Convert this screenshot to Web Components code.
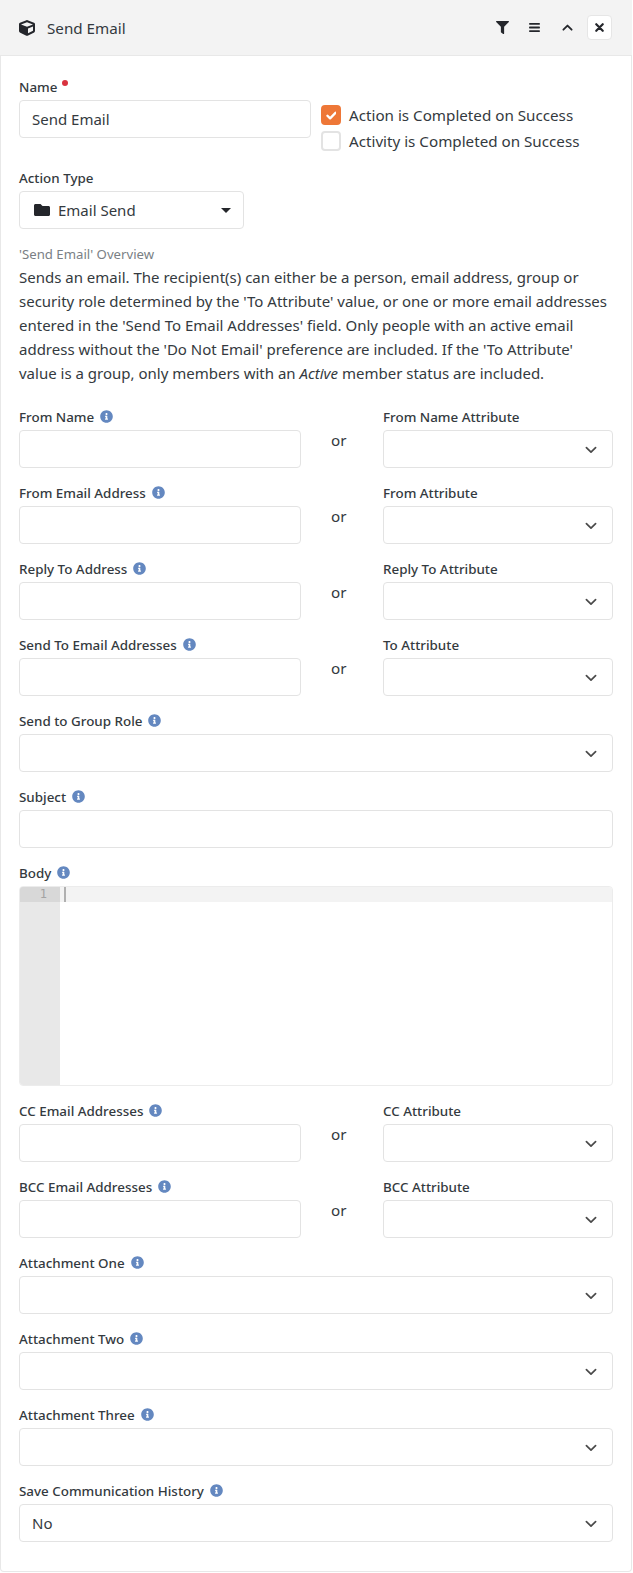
<!DOCTYPE html>
<html>
<head>
<meta charset="utf-8">
<title>Send Email</title>
<style>
  html, body { margin: 0; background: #fff; }
  body { font-family: "Noto Sans", sans-serif; color: #343a40; font-size: 15.2px; }
</style>
</head>
<body>
<action-panel heading="Send Email"></action-panel>

<script>
const ICONS = {
  cube: `<svg viewBox="0 0 512 512"><path fill="currentColor" d="M239.1 6.3l-208 78c-18.7 7-31.1 25-31.1 45v225.1c0 18.2 10.3 34.8 26.5 42.9l208 104c13.5 6.8 29.4 6.8 42.9 0l208-104c16.3-8.1 26.5-24.8 26.5-42.9V129.3c0-20-12.4-37.9-31.1-44.9l-208-78C262 2.2 250 2.2 239.1 6.3zM256 68.4l192 72v1.1l-192 78-192-78v-1.1l192-72zm32 356V275.5l160-65v133.9l-160 80z"/></svg>`,
  filter: `<svg viewBox="0 0 512 512"><path fill="currentColor" d="M487.976 0H24.028C2.71 0-8.047 25.866 7.058 40.971L192 225.941V432c0 7.831 3.821 15.17 10.237 19.662l80 55.98C298.02 518.69 320 507.493 320 487.98V225.941l184.947-184.97C520.021 25.896 509.338 0 487.976 0z"/></svg>`,
  bars: `<svg viewBox="0 0 12 10"><path fill="currentColor" d="M.5 0h11a.5.5 0 0 1 .5.5v1a.5.5 0 0 1-.5.5H.5a.5.5 0 0 1-.5-.5v-1A.5.5 0 0 1 .5 0zm0 4h11a.5.5 0 0 1 .5.5v1a.5.5 0 0 1-.5.5H.5a.5.5 0 0 1-.5-.5v-1A.5.5 0 0 1 .5 4zm0 4h11a.5.5 0 0 1 .5.5v1a.5.5 0 0 1-.5.5H.5a.5.5 0 0 1-.5-.5v-1A.5.5 0 0 1 .5 8z"/></svg>`,
  up: `<svg viewBox="0 0 12 8"><path fill="none" stroke="currentColor" stroke-width="2.1" stroke-linecap="round" stroke-linejoin="round" d="M1.3 6.5 6 1.8l4.7 4.7"/></svg>`,
  times: `<svg viewBox="0 0 10 10"><path fill="none" stroke="currentColor" stroke-width="2.4" stroke-linecap="round" d="M1.4 1.4l7.2 7.2M8.6 1.4 1.4 8.6"/></svg>`,
  folder: `<svg viewBox="0 0 512 512"><path fill="currentColor" d="M464 128H272l-64-64H48C21.49 64 0 85.49 0 112v288c0 26.51 21.49 48 48 48h416c26.51 0 48-21.49 48-48V176c0-26.51-21.49-48-48-48z"/></svg>`,
  info: `<svg viewBox="0 0 512 512"><path fill="currentColor" d="M256 8C119.043 8 8 119.083 8 256c0 136.997 111.043 248 248 248s248-111.003 248-248C504 119.083 392.957 8 256 8zm0 110c23.196 0 42 18.804 42 42s-18.804 42-42 42-42-18.804-42-42 18.804-42 42-42zm56 254c0 6.627-5.373 12-12 12h-88c-6.627 0-12-5.373-12-12v-24c0-6.627 5.373-12 12-12h12v-64h-12c-6.627 0-12-5.373-12-12v-24c0-6.627 5.373-12 12-12h64c6.627 0 12 5.373 12 12v100h12c6.627 0 12 5.373 12 12v24z"/></svg>`,
  chevron: `<svg viewBox="0 0 12 8"><path fill="none" stroke="currentColor" stroke-width="1.7" stroke-linecap="round" stroke-linejoin="round" d="M1.4 1.6 6 6.1l4.6-4.5"/></svg>`,
  check: `<svg viewBox="0 0 12 10"><path fill="none" stroke="currentColor" stroke-width="2.6" stroke-linecap="round" stroke-linejoin="round" d="M1.6 5.2 4.5 8l5.9-6"/></svg>`
};

class TextBox extends HTMLElement {
  constructor() {
    super();
    this.attachShadow({ mode: "open" });
  }
  connectedCallback() {
    this.shadowRoot.innerHTML = `
    <style>
      :host { display: block; box-sizing: border-box; height: 38px; padding: 0 12px; border: 1px solid #e3e3e3; border-radius: 4px; background: #fff; font-size: 15px; line-height: 36px; color: #343a40; }
    </style>
    <slot></slot>`;
  }
}
customElements.define("text-box", TextBox);

class SelectBox extends HTMLElement {
  constructor() {
    super();
    this.attachShadow({ mode: "open" });
  }
  connectedCallback() {
    this.shadowRoot.innerHTML = `
    <style>
      :host { display: flex; align-items: center; justify-content: space-between; box-sizing: border-box; height: 38px; padding: 0 15px 0 12px; border: 1px solid #e3e3e3; border-radius: 4px; background: #fff; font-size: 15px; color: #343a40; }
      .arrow { display: block; width: 12px; height: 8px; color: #4a4a4a; margin-top: 1px; }
      svg { display: block; }
    </style>
    <span><slot></slot></span>
    <span class="arrow">${ICONS.chevron}</span>`;
  }
}
customElements.define("select-box", SelectBox);

class PickerBox extends HTMLElement {
  constructor() {
    super();
    this.attachShadow({ mode: "open" });
  }
  connectedCallback() {
    this.shadowRoot.innerHTML = `
    <style>
      :host { display: flex; align-items: center; box-sizing: border-box; width: 225px; height: 38px; padding: 0 12px 0 14px; border: 1px solid #e3e3e3; border-radius: 4px; background: #fff; font-size: 15px; color: #343a40; }
      .folder { width: 16px; height: 16px; margin-right: 8px; color: #24262b; }
      .text { flex: 1; }
      .caret { width: 0; height: 0; border: 5px solid transparent; border-top: 5px solid #24262b; border-bottom: 0; }
      svg { display: block; }
    </style>
    <span class="folder">${ICONS.folder}</span>
    <span class="text"><slot></slot></span>
    <span class="caret"></span>`;
  }
}
customElements.define("picker-box", PickerBox);

class FormField extends HTMLElement {
  constructor() {
    super();
    this.attachShadow({ mode: "open" });
  }
  connectedCallback() {
    let label = this.getAttribute("label") ?? "";
    let mark = "";
    if (this.hasAttribute("required")) mark = `<span class="req"></span>`;
    if (this.hasAttribute("info")) mark = `<span class="info">${ICONS.info}</span>`;
    this.shadowRoot.innerHTML = `
    <style>
      :host { display: block; margin-bottom: var(--gap, 14px); }
      .label { display: flex; align-items: center; box-sizing: border-box; height: 24px; padding-bottom: 3px; font-size: 13.4px; font-weight: 500; color: #343a40; white-space: nowrap; }
      .req { width: 6px; height: 6px; border-radius: 50%; background: #d9333f; margin: -8px 0 0 5px; }
      .info { width: 13px; height: 13px; margin: -1px 0 0 6px; color: #6488c0; }
      svg { display: block; }
    </style>
    <div class="label">${label}${mark}</div>
    <slot></slot>`;
  }
}
customElements.define("form-field", FormField);

class OrRow extends HTMLElement {
  constructor() {
    super();
    this.attachShadow({ mode: "open" });
  }
  connectedCallback() {
    this.shadowRoot.innerHTML = `
    <style>
      :host { display: grid; grid-template-columns: 282px 82px 1fr; }
      .or { padding: 22px 0 0 30px; font-size: 15.2px; line-height: 24px; color: #343a40; }
    </style>
    <slot name="left"></slot>
    <div class="or">or</div>
    <slot name="right"></slot>`;
  }
}
customElements.define("or-row", OrRow);

class CheckItem extends HTMLElement {
  constructor() {
    super();
    this.attachShadow({ mode: "open" });
  }
  connectedCallback() {
    let on = this.hasAttribute("checked");
    this.shadowRoot.innerHTML = `
    <style>
      :host { display: flex; align-items: center; height: 26px; font-size: 15.2px; color: #343a40; white-space: nowrap; }
      .box { box-sizing: border-box; display: flex; align-items: center; justify-content: center; width: 20px; height: 20px; margin-right: 8px; border-radius: 4px; border: 2px solid #e3e3e3; background: #fff; color: #fff; }
      .box.on { background: #ee7737; border-color: #ee7737; }
      .box span { display: block; width: 11px; height: 9px; }
      svg { display: block; }
    </style>
    <div class="box ${on ? "on" : ""}">${on ? `<span>${ICONS.check}</span>` : ""}</div>
    <slot></slot>`;
  }
}
customElements.define("check-item", CheckItem);

class CodeEditor extends HTMLElement {
  constructor() {
    super();
    this.attachShadow({ mode: "open" });
  }
  connectedCallback() {
    this.shadowRoot.innerHTML = `
    <style>
      :host { display: flex; box-sizing: border-box; height: 200px; border: 1px solid #ececec; border-radius: 4px; overflow: hidden; background: #fff; }
      .gutter { width: 40px; background: #e8e8e8; }
      .num { height: 15px; padding-right: 13px; background: #d8d8d8; text-align: right; font-size: 12px; line-height: 15px; color: #a3a3a3; font-family: "DejaVu Sans Mono", monospace; }
      .lines { flex: 1; }
      .active { height: 15px; padding-left: 4px; background: #f3f3f3; }
      .cursor { width: 2px; height: 15px; background: #b0b0b0; }
    </style>
    <div class="gutter"><div class="num">1</div></div>
    <div class="lines"><div class="active"><div class="cursor"></div></div></div>`;
  }
}
customElements.define("code-editor", CodeEditor);

class ActionPanel extends HTMLElement {
  constructor() {
    super();
    this.attachShadow({ mode: "open" });
  }
  connectedCallback() {
    let heading = this.getAttribute("heading") ?? "";
    this.shadowRoot.innerHTML = `
    <style>
      :host { display: block; box-sizing: border-box; width: 632px; height: 1572px; border: 1px solid #e8e8e8; border-top: 0; border-radius: 0 0 4px 4px; background: #fff; }
      .head { display: flex; align-items: center; box-sizing: border-box; height: 56px; margin: 0 -1px; padding: 0 20px 0 19px; background: #f3f3f3; border-bottom: 1px solid #e8e8e8; }
      .cube { width: 16px; height: 16px; margin-right: 12px; color: #24262b; }
      .title { flex: 1; font-size: 15.2px; color: #343a40; }
      .actions { display: flex; align-items: center; gap: 7.5px; }
      .act { display: flex; align-items: center; justify-content: center; box-sizing: border-box; width: 25px; height: 25px; color: #24262b; }
      .act.filter svg { width: 13px; height: 13px; }
      .act.bars svg { width: 11px; height: 9px; }
      .act.up svg { width: 11px; height: 7px; }
      .act.close { background: #fff; border: 1px solid #e6e6e6; border-radius: 4px; }
      .act.close svg { width: 9px; height: 9px; }
      svg { display: block; }
      .body { padding: 20px 18px 0 18px; }
    </style>
    <div class="head">
      <span class="cube">${ICONS.cube}</span>
      <span class="title">${heading}</span>
      <div class="actions">
        <span class="act filter">${ICONS.filter}</span>
        <span class="act bars">${ICONS.bars}</span>
        <span class="act up">${ICONS.up}</span>
        <span class="act close">${ICONS.times}</span>
      </div>
    </div>
    <div class="body"><slot></slot></div>`;
  }
}
customElements.define("action-panel", ActionPanel);

class TopRow extends HTMLElement {
  constructor() {
    super();
    this.attachShadow({ mode: "open" });
  }
  connectedCallback() {
    this.shadowRoot.innerHTML = `
    <style>
      :host { display: grid; grid-template-columns: 292px 1fr; }
      .checks { padding: 26px 0 0 10px; }
    </style>
    <slot name="left"></slot>
    <div class="checks"><slot name="right"></slot></div>`;
  }
}
customElements.define("top-row", TopRow);

class OverviewNote extends HTMLElement {
  constructor() {
    super();
    this.attachShadow({ mode: "open" });
  }
  connectedCallback() {
    let heading = this.getAttribute("heading") ?? "";
    this.shadowRoot.innerHTML = `
    <style>
      :host { display: block; margin: 0 0 21px; padding-top: 14px; }
      .small { height: 22px; font-size: 13.2px; line-height: 22px; color: #7a7f85; }
      .text { font-size: 15px; line-height: 24px; color: #343a40; }
    </style>
    <div class="small">${heading}</div>
    <div class="text"><slot></slot></div>`;
  }
}
customElements.define("overview-note", OverviewNote);

// the rest of the form is plain data, one entry per row
const ROWS = [
  ["or", "From Name", "From Name Attribute"],
  ["or", "From Email Address", "From Attribute"],
  ["or", "Reply To Address", "Reply To Attribute"],
  ["or", "Send To Email Addresses", "To Attribute"],
  ["select", "Send to Group Role"],
  ["text", "Subject"],
  ["code", "Body"],
  ["or", "CC Email Addresses", "CC Attribute"],
  ["or", "BCC Email Addresses", "BCC Attribute"],
  ["select", "Attachment One"],
  ["select", "Attachment Two"],
  ["select", "Attachment Three"],
  ["select", "Save Communication History", "No"]
];

function rowHtml(row) {
  let [kind, label, extra] = row;
  if (kind === "or") {
    return `<or-row>
      <form-field slot="left" label="${label}" info style="--gap:14px"><text-box></text-box></form-field>
      <form-field slot="right" label="${extra}" style="--gap:14px"><select-box></select-box></form-field>
    </or-row>`;
  }
  if (kind === "select") return `<form-field label="${label}" info><select-box>${extra ?? ""}</select-box></form-field>`;
  if (kind === "text") return `<form-field label="${label}" info><text-box></text-box></form-field>`;
  return `<form-field label="${label}" info><code-editor></code-editor></form-field>`;
}

document.querySelector("action-panel").innerHTML = `
  <top-row>
    <form-field slot="left" label="Name" required style="--gap:29px"><text-box>Send Email</text-box></form-field>
    <div slot="right">
      <check-item checked>Action is Completed on Success</check-item>
      <check-item>Activity is Completed on Success</check-item>
    </div>
  </top-row>
  <form-field label="Action Type" style="--gap:0"><picker-box>Email Send</picker-box></form-field>
  <overview-note heading="'Send Email' Overview">Sends an email. The recipient(s) can either be a person, email address, group or security role determined by the 'To Attribute' value, or one or more email addresses entered in the 'Send To Email Addresses' field. Only people with an active email address without the 'Do Not Email' preference are included. If the 'To Attribute' value is a group, only members with an <em>Active</em> member status are included.</overview-note>
  ${ROWS.map(rowHtml).join("")}
`;
</script>
</body>
</html>
